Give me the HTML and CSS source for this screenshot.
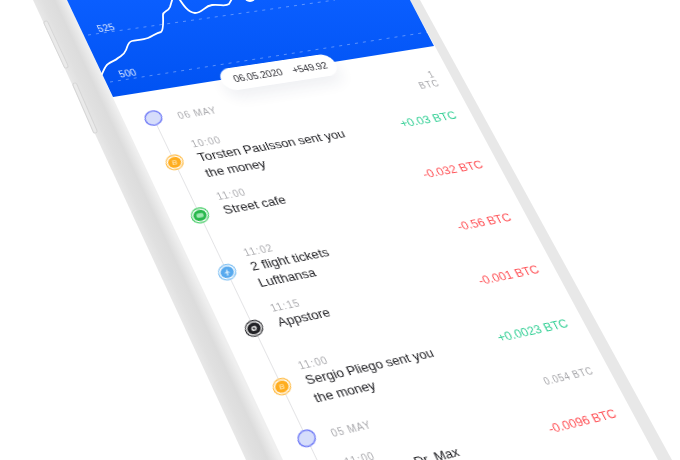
FILE: index.html
```html
<!DOCTYPE html>
<html lang="en">
<head>
<meta charset="utf-8">
<title>Wallet</title>
<link rel="stylesheet" href="styles.css">
</head>
<body>
<div class="scene">
  <svg class="phone" width="680" height="460" viewBox="0 0 680 460" aria-hidden="true">
    <defs>
      <linearGradient id="rim" gradientUnits="userSpaceOnUse" x1="139" y1="230" x2="167" y2="217">
        <stop offset="0" stop-color="#e8e8e8"/>
        <stop offset=".3" stop-color="#e0e0e0"/>
        <stop offset=".65" stop-color="#dcdcdc"/>
        <stop offset="1" stop-color="#efefef"/>
      </linearGradient>
      <linearGradient id="screen" x1="0" y1="0" x2="0" y2="1">
        <stop offset="0" stop-color="#0a5eff"/>
        <stop offset="1" stop-color="#0052f2"/>
      </linearGradient>
    </defs>
    <polygon points="33,0 67,0 283,460 246,460" fill="url(#rim)"/>
    <polygon points="410,0 420,0 672,460 658,460" fill="#e8e8e8"/>
    <g class="side-button">
      <line x1="46" y1="23" x2="66" y2="66"/>
      <line x1="75" y1="85" x2="95" y2="131"/>
    </g>
    <g class="side-button-top">
      <line x1="46" y1="23" x2="66" y2="66"/>
      <line x1="75" y1="85" x2="95" y2="131"/>
    </g>
    <polygon points="67,0 410,0 434,46 113,97" fill="url(#screen)"/>
    <line class="grid-line" x1="88" y1="35" x2="335" y2="0"/>
    <line class="grid-line" x1="110" y1="82" x2="428" y2="32"/>
    <path class="chart-line" d="M102,74 C104,70 105,66 108,64 C112,61 115,61 118,58 C122,55 124,55 126,50 C128,45 128,42 132,41 C136,40 143,40 148,38 C153,36 156,33 161,32 C164,30 163,18 163,15 C163,11 168,12 170,7 L173,-3 C174,-8 177,-8 178,-3 C182,3 187,12 195,13 C203,13 204,6 212,5 C220,4 225,7 229,4 L233,-3"/>
    <circle cx="250" cy="-4" r="6" fill="#fff"/>
    <symbol id="coin" viewBox="0 0 17 17" preserveAspectRatio="none">
      <circle cx="8.5" cy="8.5" r="7.9" fill="#fff" stroke="#ffb93e" stroke-width="1.1"/>
      <circle cx="8.5" cy="8.5" r="6.1" fill="#ffad1f"/>
      <text x="8.5" y="11" class="coin-b">B</text>
    </symbol>
    <symbol id="cafe" viewBox="0 0 17 17" preserveAspectRatio="none">
      <circle cx="8.5" cy="8.5" r="7.9" fill="#fff" stroke="#3ccb5f" stroke-width="1.1"/>
      <circle cx="8.5" cy="8.5" r="6.1" fill="#28b84c"/>
      <rect x="5.2" y="6.2" width="6.6" height="4.6" rx="1.6" fill="#9fe6b2"/>
    </symbol>
    <symbol id="flight" viewBox="0 0 17 17" preserveAspectRatio="none">
      <circle cx="8.5" cy="8.5" r="7.9" fill="#fff" stroke="#79bdf2" stroke-width="1.1"/>
      <circle cx="8.5" cy="8.5" r="6.1" fill="#57a9ee"/>
      <path d="M8.5 4.8 L9.2 7.6 L11.4 9.6 L9.2 9.2 L9 11 L9.9 11.8 L7.1 11.8 L8 11 L7.8 9.2 L5.6 9.6 L7.8 7.6 Z" fill="#d5ebfc"/>
    </symbol>
    <symbol id="store" viewBox="0 0 17 17" preserveAspectRatio="none">
      <circle cx="8.5" cy="8.5" r="7.9" fill="#fff" stroke="#2a2a2e" stroke-width="1.1"/>
      <circle cx="8.5" cy="8.5" r="6.1" fill="#222226"/>
      <circle cx="8.5" cy="8.5" r="2.6" fill="#e4e4e4"/>
      <circle cx="8.5" cy="8.5" r="1.1" fill="#222226"/>
    </symbol>
    <symbol id="day" viewBox="0 0 17 17" preserveAspectRatio="none">
      <circle cx="8.5" cy="8.5" r="7.8" fill="#d6ddfb" stroke="#6b76f6" stroke-width="1.2"/>
    </symbol>
  </svg>

  <main class="plane">
    <section class="chart">
      <span class="axis-label">525</span>
      <span class="axis-label">500</span>
      <div class="pill"><span>06.05.2020</span><span>+549.92</span></div>
    </section>

    <section class="timeline">
      <div class="row day-row">
        <svg class="dot"><use href="#day"/></svg>
        <span class="day">06 May</span>
        <span class="note note-narrow">1<br>BTC</span>
      </div>
      <div class="row">
        <span class="time">10:00</span>
        <svg class="dot"><use href="#coin"/></svg>
        <p class="title">Torsten Paulsson sent you<br>the money</p>
        <span class="amount plus">+0.03 BTC</span>
      </div>
      <div class="row">
        <span class="time">11:00</span>
        <svg class="dot"><use href="#cafe"/></svg>
        <p class="title">Street cafe</p>
        <span class="amount minus">-0.032 BTC</span>
      </div>
      <div class="row">
        <span class="time">11:02</span>
        <svg class="dot"><use href="#flight"/></svg>
        <p class="title">2 flight tickets<br>Lufthansa</p>
        <span class="amount minus">-0.56 BTC</span>
      </div>
      <div class="row">
        <span class="time">11:15</span>
        <svg class="dot"><use href="#store"/></svg>
        <p class="title">Appstore</p>
        <span class="amount minus">-0.001 BTC</span>
      </div>
      <div class="row">
        <span class="time">11:00</span>
        <svg class="dot"><use href="#coin"/></svg>
        <p class="title">Sergio Pliego sent you<br>the money</p>
        <span class="amount plus">+0.0023 BTC</span>
      </div>
      <div class="row day-row">
        <svg class="dot"><use href="#day"/></svg>
        <span class="day">05 May</span>
        <span class="note">0.054 BTC</span>
      </div>
      <div class="row">
        <span class="time">11:00</span>
        <svg class="dot"><use href="#coin"/></svg>
        <p class="title">Pharmacy Dr. Max</p>
        <span class="amount minus">-0.0096 BTC</span>
      </div>
    </section>
  </main>
</div>
</body>
</html>
```

FILE: styles.css
```css
html, body {
  margin: 0;
  padding: 0;
  background: #fff;
}

.scene {
  position: relative;
  width: 680px;
  height: 460px;
  overflow: hidden;
  font-family: "Liberation Sans", Arial, sans-serif;
}

.phone {
  position: absolute;
  left: 0;
  top: 0;
  overflow: hidden;
  filter: blur(0.35px);
}

.side-button line {
  stroke: #d6d6d6;
  stroke-width: 5;
  stroke-linecap: round;
}

.side-button-top line {
  stroke: #eaeaea;
  stroke-width: 3;
  stroke-linecap: round;
}

.grid-line {
  stroke: rgba(255, 255, 255, 0.34);
  stroke-width: 1;
  stroke-dasharray: 3 5;
}

.chart-line {
  fill: none;
  stroke: #fff;
  stroke-width: 1.8;
  stroke-linecap: round;
}

.coin-b {
  font: bold 7px "Liberation Sans", Arial, sans-serif;
  fill: #ffe2a8;
  text-anchor: middle;
}

/* The phone's screen plane, projected onto the canvas */
.plane {
  position: absolute;
  left: 0;
  top: 0;
  box-sizing: border-box;
  width: 343.3px;
  padding-left: 30px;
  transform-origin: 0 0;
  transform: matrix3d(
    0.99517, -0.12599, 0, 0.00020871,
    0.39039, 0.84900, 0, -0.00016213,
    0, 0, 1, 0,
    174, 162, 0, 1
  ) translate(-30px, -180px);
  filter: blur(0.4px);
}

.chart {
  position: relative;
  height: 121px;
  box-sizing: border-box;
  margin-left: -12.8px;
  padding-top: 16px;
  display: flex;
  flex-direction: column;
  align-items: flex-start;
  gap: 40.6px;
}

.axis-label {
  font-size: 10.3px;
  line-height: 13px;
  color: rgba(255, 255, 255, 0.88);
  letter-spacing: 0.2px;
}

.pill {
  position: absolute;
  left: 99px;
  top: 86.5px;
  width: 127px;
  height: 26px;
  box-sizing: border-box;
  padding: 0 10px 0 13px;
  border-radius: 13px;
  background: #fff;
  box-shadow: 0 9px 16px rgba(30, 40, 80, 0.07);
  display: flex;
  align-items: center;
  justify-content: space-between;
  font-size: 10.7px;
  color: #2e2e34;
}

.timeline {
  position: relative;
  display: grid;
  grid-template-rows: 31.25px 60.7px 62.1px 61.2px 62.5px 73px 27.5px auto;
}

.timeline::before {
  content: "";
  position: absolute;
  left: -0.5px;
  top: 8px;
  bottom: 0;
  width: 1px;
  background: #e4e4e6;
}

.row {
  position: relative;
  display: grid;
  grid-template-columns: 25.6px 1fr auto;
  grid-template-rows: 19.5px auto;
}

.day-row {
  grid-template-rows: auto;
}

.dot {
  grid-column: 1;
  width: 18.9px;
  height: 17px;
  margin-left: -9.45px;
  transform: skewX(-14deg);
}

.row > .dot {
  grid-row: 2;
}

.day-row > .dot {
  grid-row: 1;
}

.time {
  grid-column: 2;
  grid-row: 1;
  box-sizing: border-box;
  height: 19.5px;
  padding-top: 4.5px;
  font-size: 10.2px;
  line-height: 15px;
  letter-spacing: 1.05px;
  color: #a9a9ad;
}

.title {
  grid-column: 2;
  grid-row: 2;
  margin: -1px 0 0;
  font-size: 13.55px;
  line-height: 18.5px;
  color: #222226;
}

.amount {
  grid-column: 3;
  grid-row: 2;
  font-size: 13.45px;
  line-height: 16.5px;
  text-align: right;
}

.plus {
  color: #35d096;
}

.minus {
  color: #ff5257;
}

.day {
  grid-column: 2;
  grid-row: 1;
  padding-top: 2.5px;
  font-size: 10.2px;
  line-height: 16.5px;
  letter-spacing: 0.9px;
  text-transform: uppercase;
  color: #a9a9ad;
}

.note {
  grid-column: 3;
  grid-row: 1;
  font-size: 10px;
  line-height: 16.5px;
  letter-spacing: 0.9px;
  text-align: right;
  color: #a2a2a6;
}

.note-narrow {
  line-height: 11px;
  padding-top: 3px;
}
```
